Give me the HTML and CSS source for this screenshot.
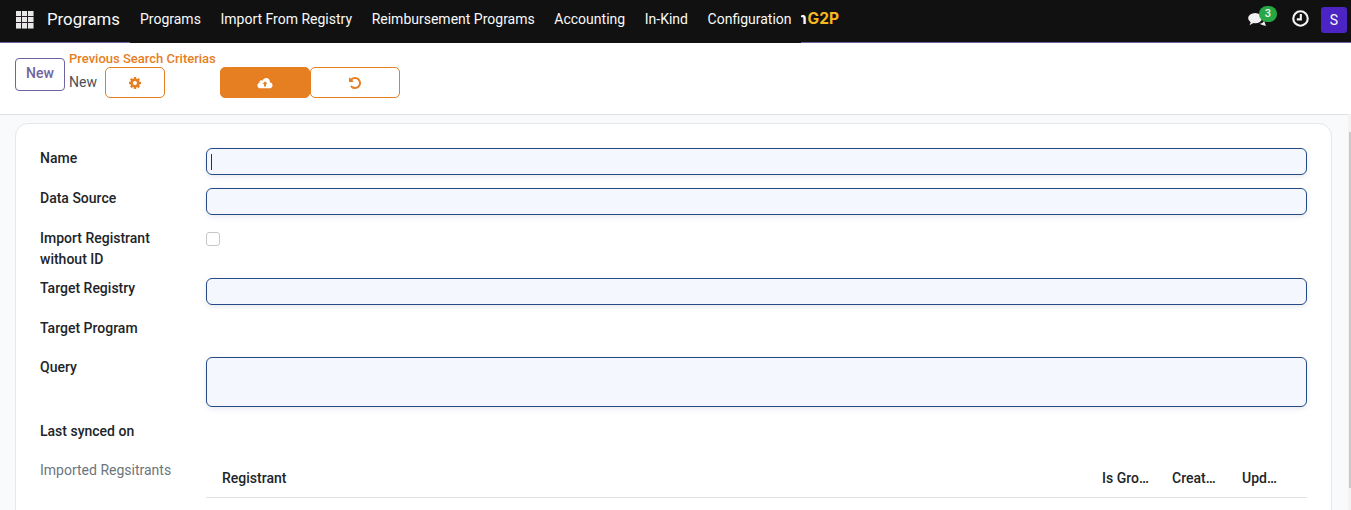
FILE: index.html
```html
<!DOCTYPE html>
<html lang="en">
<head>
<meta charset="utf-8">
<title>Programs</title>
<link rel="stylesheet" href="styles.css">
</head>
<body>
<header class="navbar">
  <div class="nav-left">
    <svg class="apps-icon" viewBox="0 0 18 18" aria-hidden="true">
      <rect class="apps-bg" width="18" height="18"/>
      <rect class="apps-cell" x="0" y="0" width="5" height="5"/><rect class="apps-cell" x="6" y="0" width="5" height="5"/><rect class="apps-cell" x="12" y="0" width="5.500" height="5"/>
      <rect class="apps-cell" x="0" y="6" width="5" height="5"/><rect class="apps-cell" x="6" y="6" width="5" height="5"/><rect class="apps-cell" x="12" y="6" width="5.500" height="5"/>
      <rect class="apps-cell" x="0" y="12" width="5" height="5.500"/><rect class="apps-cell" x="6" y="12" width="5" height="5.500"/><rect class="apps-cell" x="12" y="12" width="5.500" height="5.500"/>
    </svg>
    <span class="brand">Programs</span>
  </div>
  <nav class="menu">
    <a>Programs</a>
    <a>Import From Registry</a>
    <a>Reimbursement Programs</a>
    <a>Accounting</a>
    <a>In-Kind</a>
    <a>Configuration</a>
  </nav>
  <div class="logo"><span class="logo-open">Open</span><span class="logo-g2p">G2P</span></div>
  <div class="systray">
    <div class="chat">
      <svg class="chat-icon" viewBox="0 0 20 16" aria-hidden="true">
        <ellipse cx="7.500" cy="6.500" rx="7.500" ry="5.500"/>
        <path d="M3 10 L1.500 14 L7 11Z"/>
        <path class="chat-back" d="M12 12.500 C15 12.500 16.500 11 17 9 L18 12 L19 15 L14.500 13.500Z"/>
      </svg>
      <span class="badge">3</span>
    </div>
    <svg class="clock-icon" viewBox="0 0 16 16" aria-hidden="true">
      <circle cx="8" cy="8" r="6.800"/>
      <path d="M8.300 3.800 V8.800 H4.500"/>
    </svg>
    <span class="avatar">S</span>
  </div>
</header>

<section class="control-panel">
  <button class="btn-new" type="button">New</button>
  <div class="crumbs">
    <a class="crumb-link">Previous Search Criterias</a>
    <div class="crumb-row">
      <span class="crumb-current">New</span>
      <button class="btn-outline btn-small" type="button">
        <svg class="ic ic-orange" viewBox="0 0 1536 1536" aria-hidden="true"><path d="M1024 768q0-106-75-181t-181-75-181 75-75 181 75 181 181 75 181-75 75-181zm512-109v222q0 12-8 23t-20 13l-185 28q-19 54-39 91 35 50 107 138 10 12 10 25t-9 23q-27 37-99 108t-94 71q-12 0-26-9l-138-108q-44 23-91 38-16 136-29 186-7 28-36 28h-222q-14 0-24.500-8.500t-11.500-21.500l-28-184q-49-16-90-37l-141 107q-10 9-25 9-14 0-25-11-126-114-165-168-7-10-7-23 0-12 8-23 15-21 51-66.500t54-70.500q-27-50-41-99l-183-27q-13-2-21-12.500t-8-23.500v-222q0-12 8-23t19-13l186-28q14-46 39-92-40-57-107-138-10-12-10-24 0-10 9-23 26-36 98.500-107.500t94.500-71.500q13 0 26 10l138 107q44-23 91-38 16-136 29-186 7-28 36-28h222q14 0 24.500 8.500t11.500 21.500l28 184q49 16 90 37l142-107q9-9 24-9 13 0 25 10 129 119 165 170 7 8 7 22 0 12-8 23-15 21-51 66.500t-54 70.500q26 50 41 98l183 28q13 2 21 12.500t8 23.500z"/></svg>
      </button>
      <div class="action-group">
        <button class="btn-solid" type="button">
          <svg class="ic-cloud" viewBox="0 0 18 13" aria-hidden="true">
            <path class="cloud-body" d="M4 12.500 C1.800 12.500 .5 11 .5 9.200 C.5 7.700 1.400 6.600 2.700 6.200 C2.700 6 2.700 5.900 2.700 5.700 C2.700 4.400 3.700 3.500 4.900 3.500 C5.400 3.500 5.800 3.600 6.200 3.900 C7 2 8.600 .8 10.300 .8 C12.700 .8 14.500 2.600 14.500 5 C14.500 5.200 14.500 5.400 14.500 5.600 C16.200 6 17.500 7.300 17.500 9 C17.500 11 15.900 12.500 14 12.500Z"/>
            <path class="cloud-arrow" d="M9 4.500 L11.800 7.500 H10.100 V10.300 H7.900 V7.500 H6.200Z"/>
          </svg>
        </button>
        <button class="btn-outline btn-wide" type="button">
          <svg class="ic-undo" viewBox="0 0 1536 1536" aria-hidden="true">
            <path d="M1536 768q0 156-61 298t-164 245-245 164-298 61q-172 0-327-72.500t-264-204.500q-7-10-6.500-22.500t8.500-20.500l137-138q10-9 25-9 16 2 23 12 73 95 179 147t225 52q104 0 198.500-40.500t163.500-109.500 109.500-163.500 40.500-198.500-40.500-198.500-109.500-163.500-163.500-109.500-198.500-40.500q-98 0-188 35.500t-160 101.500l137 138q31 30 14 69-17 40-59 40h-448q-26 0-45-19t-19-45v-448q0-42 40-59 39-17 69 14l130 129q107-101 244.500-156.500t284.500-55.500q156 0 298 61t245 164 164 245 61 298z"/>
          </svg>
        </button>
      </div>
    </div>
  </div>
</section>

<main class="content">
  <div class="sheet">
    <form class="form-grid">
      <label class="lbl">Name</label>
      <div class="input input-focus"><span class="caret"></span></div>

      <label class="lbl">Data Source</label>
      <div class="input"></div>

      <label class="lbl">Import Registrant without ID</label>
      <div><span class="checkbox"></span></div>

      <label class="lbl">Target Registry</label>
      <div class="input"></div>

      <label class="lbl">Target Program</label>
      <div></div>

      <label class="lbl">Query</label>
      <div class="input input-tall"></div>

      <label class="lbl">Last synced on</label>
      <div></div>

      <label class="lbl lbl-muted">Imported Regsitrants</label>
      <table class="list">
        <thead>
          <tr>
            <th>Registrant</th>
            <th class="col">Is Group</th>
            <th class="col">Created</th>
            <th class="col col-last">Updated</th>
          </tr>
        </thead>
      </table>
    </form>
  </div>
</main>
<div class="scroll-track"><div class="scroll-thumb"></div></div>
</body>
</html>
```

FILE: styles.css
```css
* { box-sizing: border-box; }
html, body { height: 100%; }
body {
  margin: 0;
  overflow: hidden;
  background: #f9fafb;
  color: #212529;
  font: 14px/21px Roboto, "Liberation Sans", sans-serif;
}

/* Navbar */
.navbar {
  display: flex;
  align-items: flex-start;
  height: 43px;
  background: #111;
  color: #f8f9fa;
  position: relative;
}
.nav-left {
  display: flex;
  align-items: center;
  width: 130px;
  height: 43px;
  padding-left: 16px;
  border-bottom: 1px solid #71639e;
}
.apps-icon { width: 18px; height: 18px; margin-top: -3px; flex: none; }
.apps-bg { fill: #2b1c2c; }
.apps-cell { fill: #e8e8e8; }
.brand {
  margin-left: 13px;
  margin-top: -3px;
  font-size: 16.800px;
  line-height: 21px;
}
.menu {
  display: flex;
  gap: 19.600px;
  width: 671px;
  padding: 9px 0 0 10px;
  height: 43px;
  white-space: nowrap;
}
.logo {
  display: flex;
  justify-content: flex-end;
  width: 38px;
  height: 43px;
  padding-top: 8px;
  overflow: hidden;
  font: 700 15.500px/21px Inter, Roboto, sans-serif;
  white-space: nowrap;
  flex: none;
  border-bottom: 1px solid #71639e;
}
.logo-open { color: #f8f9fa; flex: none; margin-right: 1px; }
.logo-g2p { color: #f5b81f; flex: none; }
.systray {
  flex: 1;
  display: flex;
  align-items: flex-start;
  justify-content: flex-end;
  height: 43px;
  padding: 7px 4px 0 0;
  border-bottom: 1px solid #71639e;
}
.chat { position: relative; width: 20px; height: 20px; margin-right: 24px; }
.chat-icon { position: absolute; left: 0; top: 5px; width: 19px; height: 15px; fill: #f1f1f1; }
.badge {
  position: absolute;
  left: 11px;
  top: -1px;
  min-width: 18px;
  height: 16px;
  border-radius: 8px;
  background: #28a745;
  color: #f1f1f1;
  font-size: 11px;
  font-weight: 500;
  line-height: 15px;
  text-align: center;
}
.clock-icon {
  width: 17px;
  height: 17px;
  margin: 3px 12px 0 0;
  fill: none;
  stroke: #f5f5f5;
  stroke-width: 2;
}
.avatar {
  width: 26px;
  height: 26px;
  border-radius: 3px;
  background: #4c24c4;
  color: #f8f9fa;
  font-size: 14px;
  line-height: 26px;
  text-align: center;
}

/* Control panel */
.control-panel {
  display: flex;
  align-items: flex-start;
  height: 72px;
  padding: 15px 0 0 15px;
  background: #fff;
  border-bottom: 1px solid #dee2e6;
}
.btn-new {
  width: 50px;
  height: 33px;
  padding: 0 0 2px;
  background: #fff;
  border: 1px solid #71639e;
  border-radius: 4px;
  color: #71639e;
  font: 500 14px/21px Roboto, sans-serif;
}
.crumbs { margin-left: 4px; }
.crumb-link {
  display: block;
  color: #e67e22;
  font-size: 13px;
  font-weight: 500;
  line-height: 15px;
  margin-top: -7px;
  height: 16px;
}
.crumb-row { display: flex; align-items: center; }
.crumb-current { width: 36px; color: #495057; }
.btn-outline, .btn-solid {
  display: flex;
  align-items: center;
  justify-content: center;
  height: 31px;
  padding: 0;
  border-radius: 5px;
  border: 1px solid #e67e22;
}
.btn-outline { background: #fff; }
.btn-small { width: 60px; }
.btn-wide { width: 90px; }
.btn-solid { width: 90px; background: #e67e22; }
.action-group { display: flex; margin-left: 55px; }
.ic { width: 12px; height: 12px; }
.ic-orange { fill: #e67e22; }
.ic-cloud { width: 16px; height: 12px; }
.cloud-body { fill: #fff; }
.cloud-arrow { fill: #e67e22; }
.ic-undo { width: 12px; height: 12px; fill: #e67e22; }

/* Form */
.content { padding: 8px 19px 0 15px; }
.sheet {
  height: 500px;
  padding: 24px 24px 0 24px;
  background: #fff;
  border: 1px solid #e5e7eb;
  border-radius: 13px;
}
.form-grid {
  display: grid;
  grid-template-columns: 166px 1fr;
  grid-template-rows: 40px 40px 50px 40px 39px 64px 39px auto;
}
.lbl { font-weight: 500; padding-right: 20px; }
.lbl-muted { color: #6c757d; font-weight: 400; }
.input {
  height: 27px;
  background: #f4f7fd;
  border: 1px solid #264a85;
  border-radius: 6px;
  box-shadow: 0 2px 5px rgba(60, 80, 120, .12);
  position: relative;
}
.input-tall { height: 50px; }
.caret {
  position: absolute;
  left: 4px;
  top: 5px;
  width: 1px;
  height: 16px;
  background: #333;
}
.checkbox {
  display: block;
  width: 14px;
  height: 14px;
  margin-top: 4px;
  background: #fff;
  border: 1px solid #c4c8cc;
  border-radius: 3px;
}
.list { width: 100%; border-collapse: collapse; table-layout: fixed; margin-top: -1px; }
.list th {
  height: 38px;
  padding: 2px 16px 0;
  font-weight: 500;
  text-align: left;
  overflow: hidden;
  white-space: nowrap;
  text-overflow: ellipsis;
  border-bottom: 1px solid #dee2e6;
}
.list th.col { width: 70px; padding: 2px 23px 0 0; }
.list th.col-last { width: 65px; padding-right: 29px; }

.scroll-track {
  position: absolute;
  right: 0;
  top: 114px;
  bottom: 0;
  width: 3px;
  padding-top: 18px;
  background: #f3f3f4;
}
.scroll-thumb {
  margin-left: 1px;
  width: 2px;
  height: 356px;
  background: #c9c9c9;
}
```
